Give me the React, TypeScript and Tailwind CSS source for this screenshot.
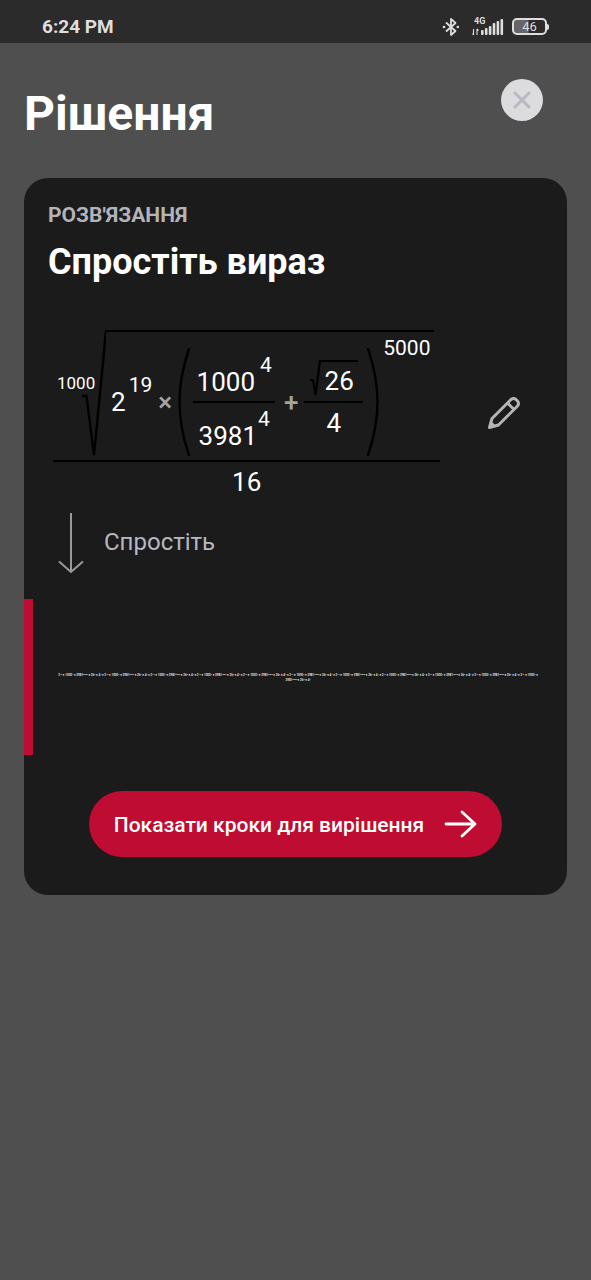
import type { ReactNode } from 'react';

const SIGNAL_BARS = [3, 5, 7, 9, 12, 14, 16];

// Each entry is one term of the expanded result: base and its exponent.
const TERMS = [
  ['2', '19'],
  ['1000', '4'],
  ['3981', '5000'],
  ['26', '2'],
  ['4', '4'],
];

const TERM_COUNT = 55;

function BluetoothIcon() {
  return (
    <svg width="18" height="20" viewBox="0 0 18 20" fill="none" stroke="#dedede" strokeWidth="1.8" aria-hidden="true">
      <path d="M4 5.500L13.500 14L9 18V2l4.500 4L4 14.500" strokeLinejoin="round" />
      <circle cx="2" cy="10" r="1.300" fill="#dedede" stroke="none" />
      <circle cx="15.800" cy="10" r="1.300" fill="#dedede" stroke="none" />
    </svg>
  );
}

function StatusBar() {
  return (
    <header className="flex h-[43px] items-center justify-between bg-[#2b2b2b] pt-2.5 pr-[42px] pl-[42px] text-[#dedede]">
      <span className="text-[19px] leading-6 font-bold">6:24 PM</span>
      <div className="flex items-center">
        <BluetoothIcon />
        <div className="relative ml-3 flex h-5 w-8 items-end">
          <span className="absolute top-0 left-0.5 text-[9px] leading-[9px] font-bold">4G</span>
          <svg width="32" height="20" viewBox="0 0 32 20" aria-hidden="true">
            <path d="M1.500 12v6M1.500 18l-1-1.500M5 18v-6M5 12l1.500 1.500" stroke="#dedede" strokeWidth="1.100" fill="none" />
            {SIGNAL_BARS.slice(1).map((h, i) => (
              <rect key={h} x={9 + i * 3.9} y={18 - h} width="2.600" height={h} rx="1" fill="#dedede" />
            ))}
          </svg>
        </div>
        <div className="ml-2 flex items-center">
          <div className="flex h-[17px] w-[35px] items-center justify-center rounded-[5px] border-2 border-[#dedede] bg-linear-to-r from-[#666] from-45% to-transparent to-50% text-[13px] leading-3">
            46
          </div>
          <div className="h-1.5 w-0.5 rounded-r-sm bg-[#dedede]" />
        </div>
      </div>
    </header>
  );
}

function Power({ base, exp, className = '' }: { base: string; exp: string; className?: string }) {
  return (
    <div className={`flex items-start ${className}`}>
      <span className="mt-3.5 text-[26px] leading-[26px]">{base}</span>
      <sup className="top-0 text-[21px] leading-[21px]">{exp}</sup>
    </div>
  );
}

function Operator({ children }: { children: ReactNode }) {
  return <span className="w-[26px] text-center text-[26px] leading-[26px] font-medium text-[#a3a3a3]">{children}</span>;
}

function Paren({ flip = false }: { flip?: boolean }) {
  return (
    <svg width="12" height="108" viewBox="0 0 12 108" fill="none" stroke="#000" strokeWidth="2.400" aria-hidden="true">
      <path
        d={flip ? 'M1 1C4 10 10.500 28 10.500 54S4 98 1 107' : 'M11 1C8 10 1.500 28 1.500 54S8 98 11 107'}
        strokeLinecap="round"
      />
    </svg>
  );
}

function Formula() {
  return (
    <div className="flex flex-col">
      <div className="flex pr-1.5">
        <div className="grid w-[53px]">
          <span className="col-start-1 row-start-1 mt-[43px] pl-1 text-[17px] leading-5">1000</span>
          <svg
            className="col-start-1 row-start-1 justify-self-end"
            width="25"
            height="128"
            viewBox="0 0 25 128"
            fill="none"
            stroke="#000"
            strokeWidth="2.400"
            aria-hidden="true"
          >
            <path d="M1 66h4.500L13 125L25 1.200" />
          </svg>
        </div>
        <div className="flex h-[130px] items-start border-t-2 border-black pt-1.5 pl-[5px]">
          <div className="flex h-full items-center pt-1.5">
            <Power base="2" exp="19" className="gap-[3px] pb-3.5" />
            <Operator>×</Operator>
            <Paren />
            <div className="mx-[3px] flex w-[82px] flex-col items-center">
              <Power base="1000" exp="4" className="gap-[5px]" />
              <div className="my-1.5 h-0.5 w-full bg-black" />
              <Power base="3981" exp="4" className="gap-px" />
            </div>
            <Operator>+</Operator>
            <div className="flex w-[59px] flex-col items-center pb-2">
              <div className="flex">
                <svg width="11" height="37" viewBox="0 0 11 37" fill="none" stroke="#000" strokeWidth="2.200" aria-hidden="true">
                  <path d="M0 20h3L5.500 35L10 1h1" />
                </svg>
                <span className="border-t-2 border-black px-1 pt-1.5 text-[26px] leading-[26px]">26</span>
              </div>
              <div className="mt-1 mb-[7px] h-0.5 w-full bg-black" />
              <span className="text-[26px] leading-[26px]">4</span>
            </div>
            <div className="ml-1 flex">
              <Paren flip />
            </div>
          </div>
          <sup className="top-0 px-1 text-[21px] leading-[21px]">5000</sup>
        </div>
      </div>
      <div className="h-0.5 bg-black" />
      <span className="pt-[7px] text-center text-[26px] leading-[26px]">16</span>
    </div>
  );
}

function Result() {
  return (
    <div className="flex min-h-[156px] items-center border-l-[9px] border-[#be0c32] pr-6 pl-5">
      <p className="w-full pt-0.5 text-center text-[3px] leading-[5px] font-medium text-white">
        {Array.from({ length: TERM_COUNT }, (_, i) => {
          const [base, exp] = TERMS[i % TERMS.length];
          return (
            <span key={i}>
              {base}
              <sup className="text-[2px]">{exp}</sup>
              {i < TERM_COUNT - 1 ? ' × ' : null}
            </span>
          );
        })}
      </p>
    </div>
  );
}

export default function App() {
  return (
    <div className="min-h-screen bg-[#4f4f4f] font-['Roboto',sans-serif] text-white">
      <StatusBar />
      <main className="px-6">
        <div className="flex h-[135px] items-start justify-between pt-9 pr-6">
          <h1 className="pt-[5px] text-[48px] leading-[60px] font-bold">Рішення</h1>
          <button
            type="button"
            aria-label="Закрити"
            className="flex size-[42px] items-center justify-center rounded-full bg-[#dcdcde]"
          >
            <svg width="18" height="18" viewBox="0 0 18 18" stroke="#b8b8c2" strokeWidth="3" strokeLinecap="round" aria-hidden="true">
              <path d="M2 2l14 14M16 2L2 16" />
            </svg>
          </button>
        </div>

        <section className="rounded-3xl bg-[#1b1b1b] pt-[25px] pb-[38px]">
          <div className="px-6">
            <h2 className="text-[21px] leading-6 font-bold text-[#b3b3ba]">РОЗВ'ЯЗАННЯ</h2>
            <p className="pt-3 text-[36px] leading-[46px] font-bold">Спростіть вираз</p>
          </div>

          <div className="flex items-center justify-between pt-[45px] pr-[46px] pl-[29px]">
            <Formula />
            <button type="button" aria-label="Редагувати">
              <svg width="34" height="34" viewBox="0 0 34 34" fill="none" stroke="#b4b4b4" strokeWidth="3" strokeLinejoin="round" aria-hidden="true">
                <path d="M2.500 31.500L5 22.500L24 3.500Q26.500 1.500 29 3.500L30.500 5Q32.500 7.500 30.500 10L11.500 29ZM20.500 7L27 13.500" />
                <path d="M2.500 31.500L4 25L9 30Z" fill="#b4b4b4" stroke="none" />
              </svg>
            </button>
          </div>

          <div className="flex items-center gap-5 pt-[17px] pl-[34px] text-[#b8b8c0]">
            <svg width="26" height="62" viewBox="0 0 26 62" fill="none" stroke="#999" strokeWidth="2" aria-hidden="true">
              <path d="M13 1v59M1 49.500L13 60L25 49.500" />
            </svg>
            <span className="pb-0.5 text-[24px] leading-7">Спростіть</span>
          </div>

          <div className="pt-[25px]">
            <Result />
          </div>

          <div className="flex justify-center pt-9">
            <button type="button" className="flex h-[66px] items-center gap-5 rounded-full bg-[#be0c32] px-[25px] text-[21px] font-medium">
              <span className="pt-1">Показати кроки для вирішення</span>
              <svg
                width="33"
                height="28"
                viewBox="0 0 33 28"
                fill="none"
                stroke="#fff"
                strokeWidth="2.800"
                strokeLinecap="round"
                strokeLinejoin="round"
                aria-hidden="true"
              >
                <path d="M2 14h29M18 2l13 12L18 26" />
              </svg>
            </button>
          </div>
        </section>
      </main>
    </div>
  );
}
